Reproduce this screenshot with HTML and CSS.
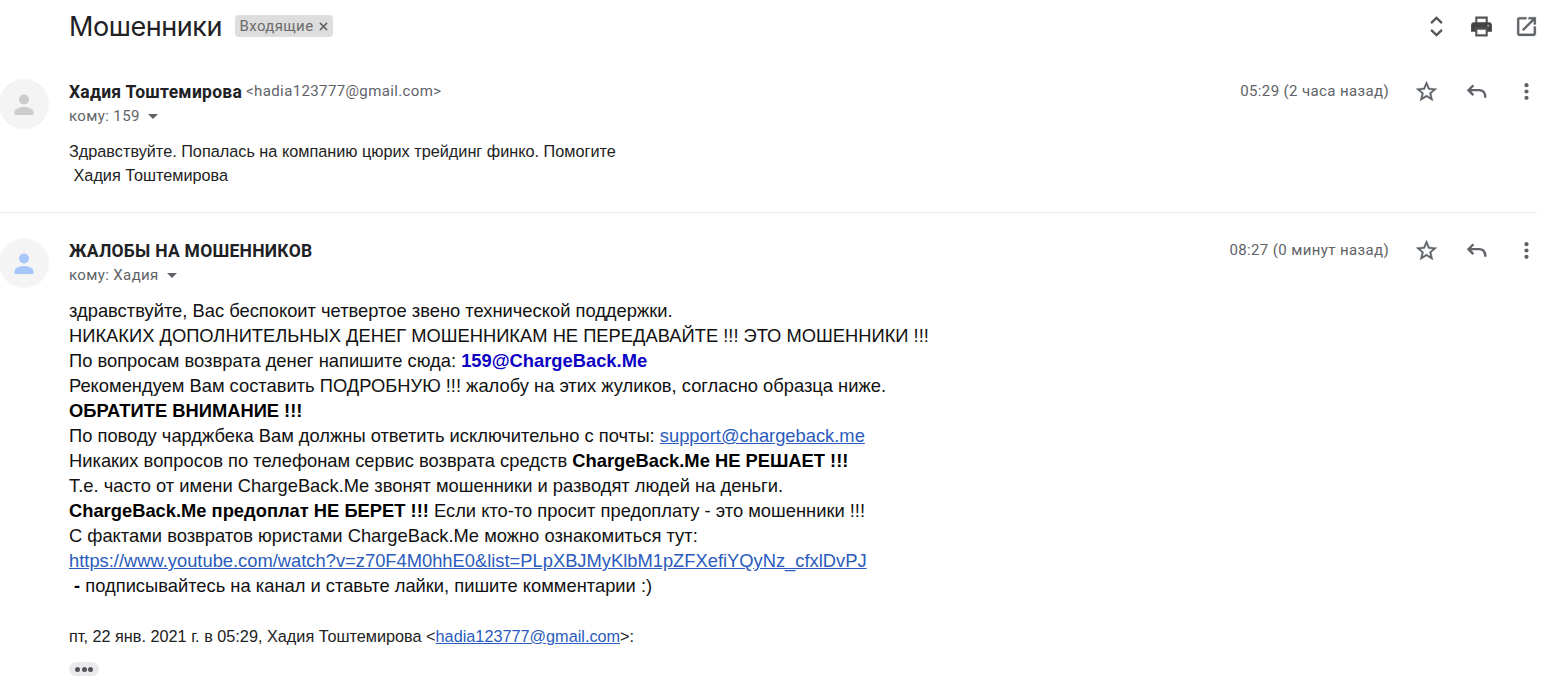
FILE: index.html
```html
<!DOCTYPE html>
<html lang="ru">
<head>
<meta charset="utf-8">
<title>Мошенники</title>
<link rel="stylesheet" href="styles.css">
</head>
<body>
<svg width="0" height="0" class="defs">
  <symbol id="person" viewBox="0 0 50 50"><circle cx="24" cy="25" r="25" fill="#f4f4f4"/><circle cx="24" cy="20.500" r="5"/><path d="M14.500 36v-3c0-3.400 6.300-5 9.500-5s9.500 1.600 9.500 5v3z"/></symbol>
  <symbol id="star" viewBox="0 0 24 24"><path d="M22 9.240l-7.190-.62L12 2 9.190 8.630 2 9.240l5.460 4.730L5.820 21 12 17.270 18.180 21l-1.630-7.030L22 9.240zM12 15.400l-3.760 2.270 1-4.280-3.320-2.880 4.380-.38L12 6.100l1.710 4.040 4.380.38-3.320 2.880 1 4.280L12 15.400z"/></symbol>
  <symbol id="reply" viewBox="0 0 24 24"><path d="M9 6l-4.700 4.700L9 15.400M5 10.700h9.500c4 0 6 2.300 6 7.300" fill="none" stroke="#5f6368" stroke-width="2.300"/></symbol>
  <symbol id="more" viewBox="0 0 24 24"><circle cx="12" cy="5.900" r="2"/><circle cx="12" cy="12" r="2"/><circle cx="12" cy="18.100" r="2"/></symbol>
</svg>
<main class="thread">
  <header class="subject">
    <h1 class="title">Мошенники</h1>
    <div class="label"><span>Входящие</span><svg class="close" viewBox="0 0 10 10"><path d="M1 1l8 8M9 1L1 9" stroke="#666" stroke-width="1.700"/></svg></div>
    <div class="tools">
      <svg class="icon" viewBox="0 0 24 24"><path d="M6.800 8.700L12 3.700l5.200 5M6.800 15.300l5.200 5 5.200-5" fill="none" stroke="#555" stroke-width="2.200"/></svg>
      <svg class="icon" viewBox="0 0 24 24"><path d="M7 9V3.500h10V9" fill="#fff" stroke="#555" stroke-width="2"/><path d="M5 8h14a3 3 0 0 1 3 3v6H2v-6a3 3 0 0 1 3-3z" fill="#444"/><path d="M7 14h10v6.500H7z" fill="#fff" stroke="#555" stroke-width="2"/><circle cx="18.500" cy="11.200" r="1.100" fill="#999"/></svg>
      <svg class="icon open" viewBox="0 0 24 24"><path d="M19 19H5V5h7V3H5a2 2 0 0 0-2 2v14a2 2 0 0 0 2 2h14c1.100 0 2-.9 2-2v-7h-2v7zM14 3v2h3.590l-9.830 9.830 1.410 1.410L19 6.410V10h2V3h-7z"/></svg>
    </div>
  </header>
  <article class="message first">
    <svg class="avatar grey"><use href="#person"/></svg>
    <div class="content">
      <div class="meta">
        <div class="who">
          <div class="sender"><b class="name">Хадия Тоштемирова</b><span class="addr">&lt;hadia123777@gmail.com&gt;</span></div>
          <div class="to"><span>кому: 159</span><i class="caret"></i></div>
        </div>
        <time class="date">05:29 (2 часа назад)</time>
        <svg class="icon star"><use href="#star"/></svg>
        <svg class="icon reply"><use href="#reply"/></svg>
        <svg class="icon more"><use href="#more"/></svg>
      </div>
      <div class="body small"><div>Здравствуйте. Попалась на компанию цюрих трейдинг финко. Помогите</div><div>&nbsp;Хадия Тоштемирова</div></div>
    </div>
  </article>
  <article class="message second">
    <svg class="avatar blue"><use href="#person"/></svg>
    <div class="content">
      <div class="meta">
        <div class="who">
          <div class="sender"><b class="name">ЖАЛОБЫ НА МОШЕННИКОВ</b></div>
          <div class="to"><span>кому: Хадия</span><i class="caret"></i></div>
        </div>
        <time class="date">08:27 (0 минут назад)</time>
        <svg class="icon star"><use href="#star"/></svg>
        <svg class="icon reply"><use href="#reply"/></svg>
        <svg class="icon more"><use href="#more"/></svg>
      </div>
      <div class="body large">
        <div>здравствуйте, Вас беспокоит четвертое звено технической поддержки.</div>
        <div>НИКАКИХ ДОПОЛНИТЕЛЬНЫХ ДЕНЕГ МОШЕННИКАМ НЕ ПЕРЕДАВАЙТЕ !!! ЭТО МОШЕННИКИ !!!</div>
        <div>По вопросам возврата денег напишите сюда: <b class="mail">159@ChargeBack.Me</b></div>
        <div>Рекомендуем Вам составить ПОДРОБНУЮ !!! жалобу на этих жуликов, согласно образца ниже.</div>
        <div><b>ОБРАТИТЕ ВНИМАНИЕ !!!</b></div>
        <div>По поводу чарджбека Вам должны ответить исключительно с почты: <a>support@chargeback.me</a></div>
        <div>Никаких вопросов по телефонам сервис возврата средств <b>ChargeBack.Me НЕ РЕШАЕТ !!!</b></div>
        <div>Т.е. часто от имени ChargeBack.Me звонят мошенники и разводят людей на деньги.</div>
        <div><b>ChargeBack.Me предоплат НЕ БЕРЕТ !!!</b> Если кто-то просит предоплату - это мошенники !!!</div>
        <div>С фактами возвратов юристами ChargeBack.Me можно ознакомиться тут:</div>
        <div><a>https://www.youtube.com/watch?v=z70F4M0hhE0&amp;list=PLpXBJMyKlbM1pZFXefiYQyNz_cfxlDvPJ</a></div>
        <div>&nbsp;<b>-</b> подписывайтесь на канал и ставьте лайки, пишите комментарии :)</div>
      </div>
      <div class="quote">пт, 22 янв. 2021 г. в 05:29, Хадия Тоштемирова &lt;<a>hadia123777@gmail.com</a>&gt;:</div>
      <div class="trim"><i></i><i></i><i></i></div>
    </div>
  </article>
</main>
</body>
</html>
```
FILE: styles.css
```css
* { box-sizing: border-box; }
body { margin: 0; background: #fff; color: #222; font-family: Roboto, "Liberation Sans", sans-serif; overflow: hidden; }
.defs { display: block; position: absolute; }
.thread { width: 1556px; height: 686px; }
.subject { display: flex; align-items: center; height: 52px; padding-left: 69px; padding-right: 17px; }
.title { margin: 0; padding-top: 2px; width: 153px; font: 400 27px/34px Inter, sans-serif; letter-spacing: -.45px; color: #202124; white-space: nowrap; }
.label { display: flex; align-items: center; gap: 6px; height: 22px; margin-left: 13px; padding: 0 5px 0 4.500px; border-radius: 4px; background: #ddd; color: #6c6c6c; font-size: 15px; letter-spacing: .375px; }
.close { width: 9px; height: 9px; }
.tools { display: flex; gap: 20px; margin-left: auto; }
.icon { display: block; width: 25px; height: 25px; fill: #5f6368; flex: none; }
.open { stroke: #5f6368; stroke-width: .3px; }
.message { display: flex; }
.first { height: 161px; width: 1537px; padding-top: 27px; border-bottom: 1px solid #e8eaed; }
.second { padding-top: 25px; width: 1537px; }
.avatar { width: 50px; height: 50px; flex: none; margin-right: 19px; }
.grey { fill: #ccc; }
.blue { fill: #a8c5fa; }
.content { flex: 1; }
.meta { display: flex; height: 60px; }
.who { flex: 1; }
.sender { display: flex; align-items: flex-start; height: 25px; line-height: 24px; gap: 4px; }
.name { font-size: 17.500px; line-height: 26px; letter-spacing: .26px; color: #202124; }
.addr, .to, .date { font-size: 15px; letter-spacing: .375px; color: #5f6368; }
.to { display: flex; align-items: center; line-height: 24px; gap: 8px; }
.caret { border: 5px solid transparent; border-top-color: #5f6368; border-bottom: 0; }
.date { line-height: 24px; margin-right: 25px; }
.star { stroke: #5f6368; stroke-width: .3px; }
.star, .reply { margin-right: 25px; }
.more { margin-right: -2px; }
.body { font-family: "Liberation Sans", Arial, sans-serif; white-space: nowrap; }
.small { font-size: 16.250px; line-height: 24px; }
.large { font-size: 18.333px; line-height: 25px; color: #111; }
.large b { color: #000; }
.large .mail { color: #0b00c4; }
a { color: #2a5bbd; text-decoration: underline; }
.quote { margin-top: 26px; font: 16.250px/25px "Liberation Sans", Arial, sans-serif; }
.trim { display: flex; align-items: center; justify-content: center; gap: 1.500px; width: 30px; height: 14px; margin-top: 13px; border-radius: 7px; background: #e8eaed; }
.trim i { width: 5px; height: 5px; border-radius: 50%; background: #555; }
```
